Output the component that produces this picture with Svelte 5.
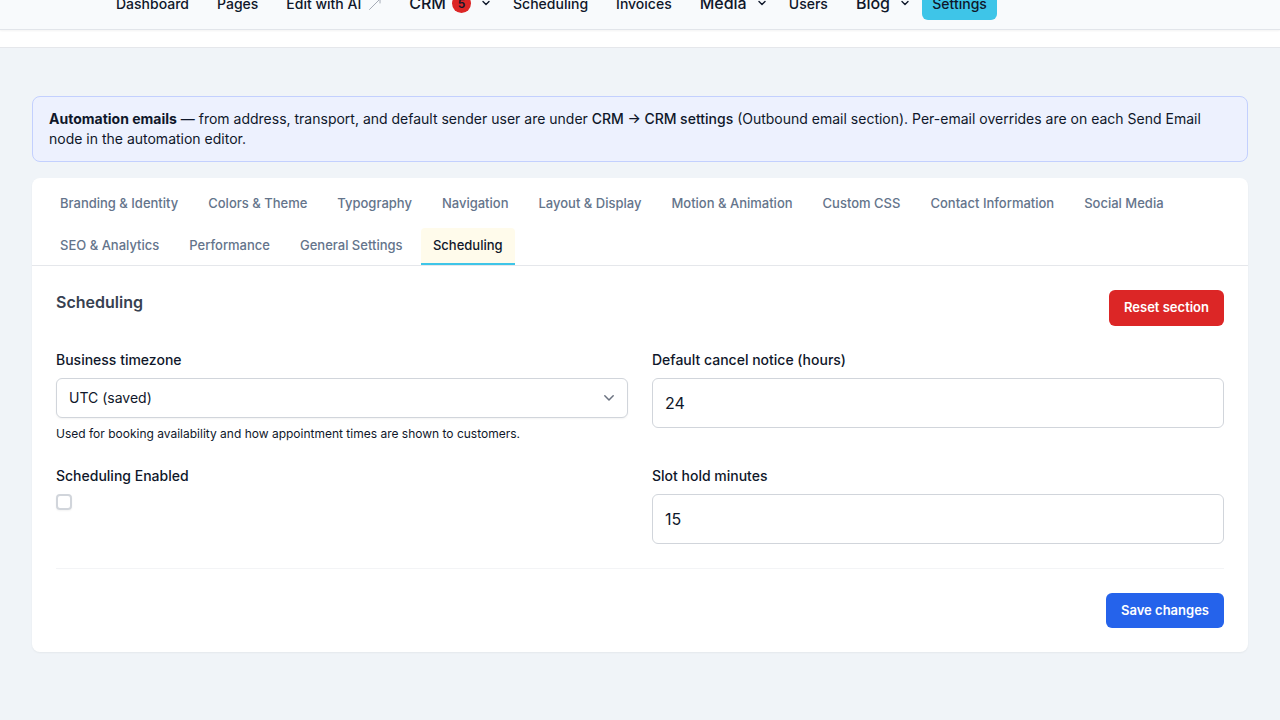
<script lang="ts">
	type NavItem = { label: string; badge?: number; menu?: boolean; external?: boolean };

	const navItems: NavItem[] = [
		{ label: 'Dashboard' },
		{ label: 'Pages' },
		{ label: 'Edit with AI', external: true },
		{ label: 'CRM', badge: 5, menu: true },
		{ label: 'Scheduling' },
		{ label: 'Invoices' },
		{ label: 'Media', menu: true },
		{ label: 'Users' },
		{ label: 'Blog', menu: true },
		{ label: 'Settings' }
	];

	const tabs = [
		'Branding & Identity',
		'Colors & Theme',
		'Typography',
		'Navigation',
		'Layout & Display',
		'Motion & Animation',
		'Custom CSS',
		'Contact Information',
		'Social Media',
		'SEO & Analytics',
		'Performance',
		'General Settings',
		'Scheduling'
	];

	let activeTab = $state('Scheduling');
	let cancelNotice = $state('24');
	let slotHold = $state('15');
	let enabled = $state(false);
</script>

<header class="topbar">
	<nav class="nav">
		{#each navItems as item}
			<a
				href="#top"
				class="nav__item"
				class:nav__item--menu={item.menu}
				class:nav__item--active={item.label === 'Settings'}
			>
				{item.label}
				{#if item.external}
					<svg class="external" width="12" height="12" viewBox="0 0 12 12">
						<path d="M.5 11.5 11 1M7 1h4v4" />
					</svg>
				{/if}
				{#if item.badge}
					<span class="badge">{item.badge}</span>
				{/if}
				{#if item.menu}
					<svg class="chevron" width="12" height="12" viewBox="0 0 12 12">
						<path d="m3 4.5 3 3 3-3" />
					</svg>
				{/if}
			</a>
		{/each}
	</nav>
</header>
<div class="subbar"></div>

<main class="page">
	<p class="notice">
		<strong>Automation emails</strong> — from address, transport, and default sender user are under
		<a href="#crm">CRM → CRM settings</a> (Outbound email section). Per-email overrides are on each
		Send Email node in the automation editor.
	</p>

	<section class="card">
		<div class="tabs">
			{#each tabs as tab}
				<button class="tab" class:active={tab === activeTab} onclick={() => (activeTab = tab)}>
					{tab}
				</button>
			{/each}
		</div>

		<div class="panel">
			<div class="panel__head">
				<h2>Scheduling</h2>
				<button class="btn btn--danger">Reset section</button>
			</div>

			<div class="fields">
				<div class="field">
					<label for="timezone">Business timezone</label>
					<div class="select">
						<select id="timezone">
							<option>UTC (saved)</option>
						</select>
						<svg width="16" height="16" viewBox="0 0 16 16">
							<path d="m3.8 5.8 4.2 4.2 4.2-4.2" />
						</svg>
					</div>
					<p class="help">
						Used for booking availability and how appointment times are shown to customers.
					</p>
				</div>
				<div class="field">
					<label for="cancel">Default cancel notice (hours)</label>
					<input id="cancel" type="text" bind:value={cancelNotice} />
				</div>
				<div class="field">
					<label for="enabled">Scheduling Enabled</label>
					<input id="enabled" type="checkbox" bind:checked={enabled} />
				</div>
				<div class="field">
					<label for="slot">Slot hold minutes</label>
					<input id="slot" type="text" bind:value={slotHold} />
				</div>
			</div>

			<div class="panel__foot">
				<button class="btn btn--primary">Save changes</button>
			</div>
		</div>
	</section>
</main>

<style>
	:global(body) {
		margin: 0;
		background: #f0f4f8;
		color: #0f172a;
		font-family: Inter, 'Liberation Sans', sans-serif;
		font-size: 14px;
		line-height: 20px;
		overflow: hidden;
	}

	* {
		box-sizing: border-box;
	}

	button,
	input,
	select {
		font-family: inherit;
		color: inherit;
		margin: 0;
	}

	svg {
		fill: none;
		stroke: currentColor;
		stroke-linecap: round;
		stroke-linejoin: round;
		flex-shrink: 0;
	}

	/* the bar is scrolled partly out of view, so its content hangs from the bottom */
	.topbar {
		height: 30px;
		padding: 0 106px 9px;
		display: flex;
		align-items: flex-end;
		background: #f8fafc;
		border-bottom: 1px solid #e2e5ea;
		box-shadow: 0 1px 2px rgba(0, 0, 0, 0.05);
		position: relative;
	}

	.nav {
		display: flex;
		align-items: flex-end;
		gap: 8px;
	}

	.nav__item {
		height: 32px;
		padding: 0 10px;
		display: flex;
		align-items: center;
		border-radius: 6px;
		color: #0f172a;
		font-weight: 500;
		text-decoration: none;
		white-space: nowrap;
	}

	.nav__item--menu {
		padding: 0 3.1px 2px 10px;
		font-size: 16px;
	}

	.nav__item--active {
		padding: 0 10.2px;
		background: #3ec5e8;
	}

	.external {
		margin-left: 8px;
		stroke: #9ca3af;
		stroke-width: 0.9;
	}

	.badge {
		width: 19px;
		height: 19px;
		margin-left: 6px;
		border-radius: 50%;
		background: #dc2626;
		font-size: 12px;
		font-weight: 600;
		line-height: 19px;
		text-align: center;
	}

	.chevron {
		margin-left: 9px;
		stroke-width: 1.4;
	}

	.subbar {
		height: 18px;
		background: #fff;
		border-bottom: 1px solid #e5e7eb;
	}

	.page {
		padding: 48px 32px;
	}

	.notice {
		margin: 0 0 16px;
		padding: 12px 16px;
		background: #edf1fe;
		border: 1px solid #c3d0fe;
		border-radius: 8px;
	}

	.notice strong {
		font-weight: 700;
	}

	.notice a {
		color: inherit;
		font-weight: 500;
		text-decoration: none;
		word-spacing: -0.15px;
	}

	.card {
		background: #fff;
		border-radius: 8px;
		box-shadow: 0 1px 2px rgba(0, 0, 0, 0.05);
	}

	.tabs {
		padding: 8px 16px 0;
		display: flex;
		flex-wrap: wrap;
		gap: 4px 6px;
		border-bottom: 1px solid #e5e7eb;
	}

	.tab {
		padding: 8px 12px;
		background: none;
		border: 0;
		border-bottom: 2px solid transparent;
		border-radius: 4px 4px 0 0;
		color: #64748b;
		font-size: 13px;
		font-weight: 500;
		line-height: 19.5px;
	}

	.tab.active {
		padding: 8px 12.4px;
		background: #fffbeb;
		border-bottom-color: #3ec5e8;
		color: #0f172a;
	}

	.panel {
		padding: 24px;
	}

	.panel__head {
		display: flex;
		justify-content: space-between;
		align-items: flex-start;
		margin-bottom: 24px;
	}

	h2 {
		margin: 0;
		color: #374151;
		font-size: 16px;
		font-weight: 600;
		line-height: 24px;
	}

	.btn {
		padding: 8px 15px;
		border: 0;
		border-radius: 6px;
		color: #fff;
		font-size: 13px;
		font-weight: 600;
		line-height: 19.5px;
	}

	.btn--danger {
		background: #dc2626;
	}

	.btn--primary {
		background: #2563eb;
	}

	.fields {
		display: grid;
		grid-template-columns: 1fr 1fr;
		gap: 24px;
	}

	.field {
		display: flex;
		flex-direction: column;
		align-items: stretch;
	}

	.field label {
		margin-bottom: 8px;
		font-weight: 500;
	}

	.field input[type='text'] {
		height: 50px;
		padding: 0 12px;
		border: 1px solid #d1d5db;
		border-radius: 6px;
		background: #fff;
		font-size: 16px;
	}

	.select {
		display: grid;
		align-items: center;
	}

	.select > * {
		grid-area: 1 / 1;
	}

	.select select {
		appearance: none;
		height: 40px;
		padding: 0 12px;
		border: 1px solid #d1d5db;
		border-radius: 6px;
		background: #fff;
		box-shadow: 0 1px 2px rgba(0, 0, 0, 0.05);
		font-size: 14px;
	}

	.select svg {
		justify-self: end;
		margin-right: 11px;
		stroke: #6b7280;
		stroke-width: 1.5;
		pointer-events: none;
	}

	.help {
		margin: 8px 0 0;
		font-size: 12px;
		line-height: 16px;
	}

	.field input[type='checkbox'] {
		appearance: none;
		width: 16px;
		height: 16px;
		border: 2px solid #d1d5db;
		border-radius: 4px;
		background: #fff;
		box-shadow: 0 1px 2px rgba(0, 0, 0, 0.05);
	}

	.panel__foot {
		margin-top: 24px;
		padding-top: 24px;
		display: flex;
		justify-content: flex-end;
		border-top: 1px solid #f3f4f6;
	}
</style>
